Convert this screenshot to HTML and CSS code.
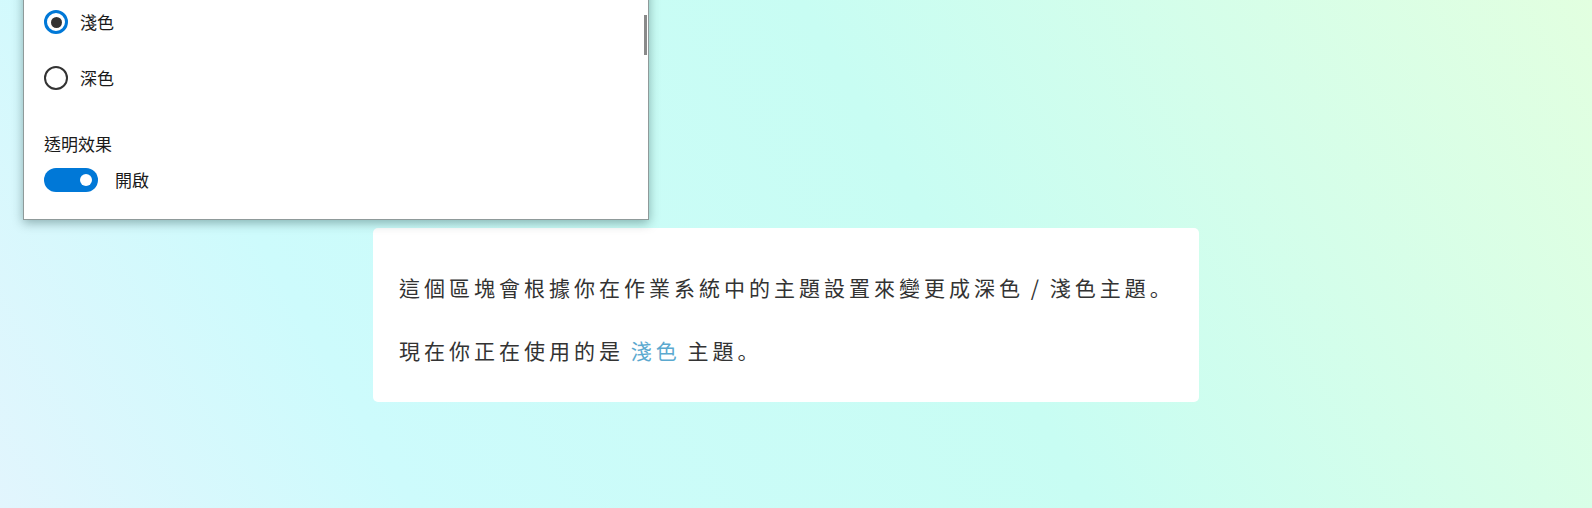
FILE: index.html
```html
<!DOCTYPE html>
<html lang="zh-Hant">
<head>
<meta charset="utf-8">
<title>主題</title>
<link rel="stylesheet" href="styles.css">
</head>
<body>
<div class="page">
  <section class="panel">
    <div class="scroll-thumb"></div>
    <div class="options">
      <label class="option">
        <span class="radio checked"><span class="dot"></span></span>
        <span class="opt-text">淺色</span>
      </label>
      <label class="option">
        <span class="radio"></span>
        <span class="opt-text">深色</span>
      </label>
    </div>
    <div class="section-label">透明效果</div>
    <div class="toggle-row">
      <span class="toggle"><span class="knob"></span></span>
      <span class="toggle-text">開啟</span>
    </div>
  </section>
  <div class="card-wrap">
    <div class="card">
      <p class="line">這個區塊會根據你在作業系統中的主題設置來變更成深色 / 淺色主題<span class="stop" lang="zh-Hans">。</span></p>
      <p class="line">現在你正在使用的是 <span class="accent">淺色</span> 主題<span class="stop" lang="zh-Hans">。</span></p>
    </div>
  </div>
</div>
</body>
</html>
```

FILE: styles.css
```css
html, body {
  margin: 0;
  padding: 0;
  height: 100%;
}

body {
  overflow: hidden;
  font-family: "Noto Sans CJK TC", "Noto Sans", sans-serif;
  background: linear-gradient(60deg, #e2f5fd 0%, #cdfbfc 22%, #c8fdf3 58%, #e2ffe0 100%);
}

.page {
  height: 508px;
  display: flex;
  flex-direction: column;
}

.panel {
  position: relative;
  box-sizing: border-box;
  width: 626px;
  margin: -20px 0 0 23px;
  padding: 21px 0 27px 20px;
  background: #ffffff;
  border: 1px solid #8f9a9a;
  box-shadow: 0 3px 10px rgba(0, 40, 40, 0.35);
  color: #1a1a1a;
  font-size: 17px;
  z-index: 2;
}

.scroll-thumb {
  position: absolute;
  top: 34px;
  right: 1px;
  width: 3px;
  height: 40px;
  background: #8a8a8a;
}

.options {
  display: flex;
  flex-direction: column;
  gap: 16px;
}

.option {
  display: flex;
  align-items: center;
  height: 40px;
  gap: 12px;
}

.radio {
  box-sizing: border-box;
  width: 24px;
  height: 24px;
  border-radius: 50%;
  border: 2.5px solid #333333;
  display: flex;
  align-items: center;
  justify-content: center;
}

.radio.checked {
  border: 3px solid #0078d7;
}

.dot {
  width: 11px;
  height: 11px;
  border-radius: 50%;
  background: #333333;
}

.opt-text, .toggle-text, .section-label {
  line-height: 24px;
}

.section-label {
  margin-top: 34px;
}

.toggle-row {
  margin-top: 12px;
  display: flex;
  align-items: center;
  gap: 17px;
}

.toggle {
  width: 54px;
  height: 24px;
  border-radius: 12px;
  background: #0078d7;
  display: flex;
  align-items: center;
  justify-content: flex-end;
  padding-right: 6px;
  box-sizing: border-box;
}

.knob {
  width: 12px;
  height: 12px;
  border-radius: 50%;
  background: #ffffff;
}

.card-wrap {
  display: flex;
  padding-left: 373px;
  margin-top: 8px;
}

.card {
  box-sizing: border-box;
  width: 826px;
  height: 174px;
  padding: 43px 20px 0 26px;
  background: #ffffff;
  border-radius: 5px;
  color: #333333;
  font-size: 21px;
  letter-spacing: 4px;
  word-spacing: -2px;
}

.line {
  margin: 0 0 31px 0;
  line-height: 32px;
  white-space: nowrap;
}

.stop {
  font-family: "Noto Sans CJK SC", "Noto Sans CJK TC", sans-serif;
}

.accent {
  color: #5ba9cf;
}
```
